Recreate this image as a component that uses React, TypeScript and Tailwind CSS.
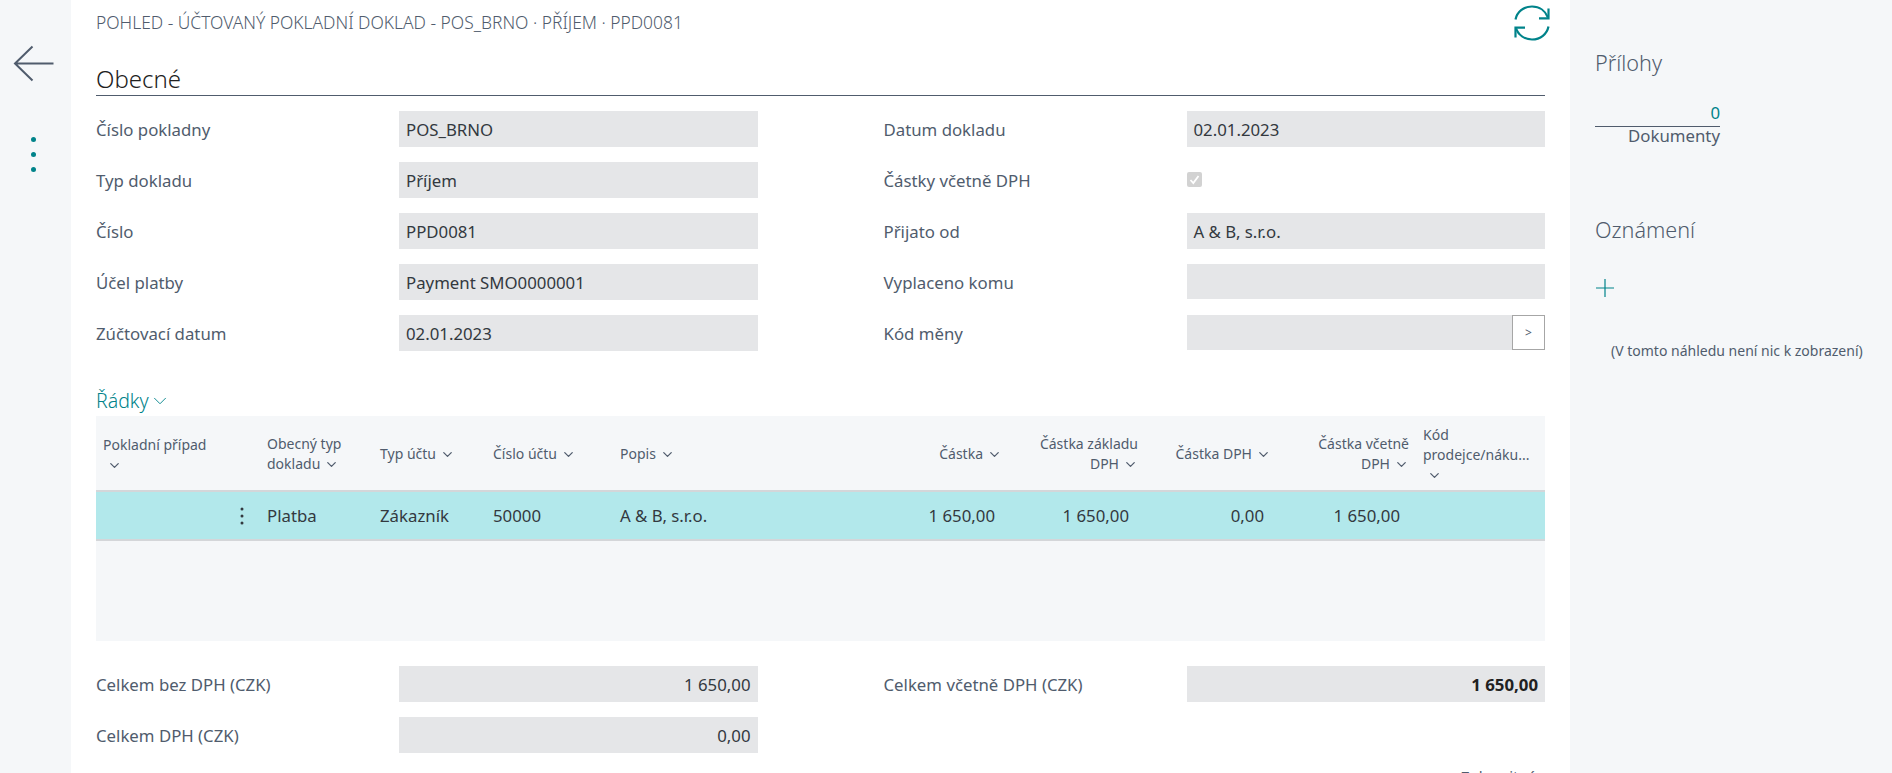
import { ChevronDown } from 'lucide-react';

const LEFT_FIELDS = [
  { label: 'Číslo pokladny', value: 'POS_BRNO' },
  { label: 'Typ dokladu', value: 'Příjem' },
  { label: 'Číslo', value: 'PPD0081' },
  { label: 'Účel platby', value: 'Payment SMO0000001' },
  { label: 'Zúčtovací datum', value: '02.01.2023' },
];

function Field({ label, children }: { label: string; children: React.ReactNode }) {
  return (
    <div className="flex h-[36px] items-center">
      <div className="w-[303px] shrink-0 pt-[1px] text-[#505c6d]">{label}</div>
      <div className="min-w-0 flex-1 self-start">{children}</div>
    </div>
  );
}

function Value({ text, right, bold }: { text?: string; right?: boolean; bold?: boolean }) {
  return (
    <div
      className={`flex items-center bg-[#e5e6e8] px-[7px] pt-[1px] text-[#33393f] ${text ? 'h-[36px]' : 'h-[35px]'} ${right ? 'justify-end' : ''} ${bold ? 'font-bold text-[#212121]' : ''}`}
    >
      {text}
    </div>
  );
}

function Head({ children, right }: { children: React.ReactNode; right?: boolean }) {
  return (
    <div className={`flex h-full items-center px-[7px] pt-[1px] ${right ? 'justify-end text-right' : ''}`}>
      <div>{children}</div>
    </div>
  );
}

const Chev = () => <ChevronDown className="ml-[4px] inline-block" size={15} strokeWidth={2} />;

export default function App() {
  return (
    <div className="flex h-[773px] overflow-hidden bg-white text-[16.8px] font-['Noto_Sans',sans-serif] leading-[20px]">
      <div className="w-[71px] shrink-0 bg-[#f5f7f9]">
        <svg className="mt-[44px] ml-[12px]" width="44" height="40" viewBox="0 0 44 40" fill="none" stroke="#505c6d" strokeWidth="2">
          <path d="M41.500 19.500H3M20.500 2.500 3 19.500l17.500 17" />
        </svg>
        <div className="mt-[53px] flex flex-col items-start gap-[10px] pl-[31px]">
          <span className="h-[5px] w-[5px] rounded-full bg-[#00838a]" />
          <span className="h-[5px] w-[5px] rounded-full bg-[#00838a]" />
          <span className="h-[5px] w-[5px] rounded-full bg-[#00838a]" />
        </div>
      </div>

      <div className="w-[1499px] shrink-0 px-[25px]">
        <div className="flex h-[44px] items-start justify-between">
          <div className="pt-[12px] text-[17.4px] font-light text-[#505c6d]">POHLED - ÚČTOVANÝ POKLADNÍ DOKLAD - POS_BRNO · PŘÍJEM · PPD0081</div>
          <svg className="mt-[4px] -mr-[6px]" width="38" height="38" viewBox="0 0 38 38" fill="none" stroke="#00838a" strokeWidth="2.200">
            <path d="M2.500 15.500C4 8 10.500 2.500 19 2.500c7.500 0 13.500 4.500 16 11" />
            <path d="M35.500 4.500v9.800h-9.500" />
            <path d="M35.500 22.500C34 30 27.500 35.500 19 35.500c-7.500 0-13.500-4.500-16-11" />
            <path d="M2.500 33.500v-9.800h9.500" />
          </svg>
        </div>

        <div className="flex h-[52px] items-end border-b border-[#505c6d] text-[24px] leading-[32px] font-light text-[#212121]">Obecné</div>

        <div className="mt-[15px] grid grid-cols-2 gap-x-[126px]">
          <div className="flex flex-col gap-[15px]">
            {LEFT_FIELDS.map((f) => (
              <Field key={f.label} label={f.label}>
                <Value text={f.value} />
              </Field>
            ))}
          </div>
          <div className="flex flex-col gap-[15px]">
            <Field label="Datum dokladu">
              <Value text="02.01.2023" />
            </Field>
            <Field label="Částky včetně DPH">
              <div className="mt-[10px] flex h-[15px] w-[15px] items-center justify-center rounded-[2px] bg-[#d2d2d2]">
                <svg width="11" height="11" viewBox="0 0 11 11" fill="none" stroke="#fff" strokeWidth="1.800">
                  <path d="M1.500 6 4.300 9 9.500 2" />
                </svg>
              </div>
            </Field>
            <Field label="Přijato od">
              <Value text="A & B, s.r.o." />
            </Field>
            <Field label="Vyplaceno komu">
              <Value />
            </Field>
            <Field label="Kód měny">
              <div className="flex h-[35px]">
                <div className="flex-1 bg-[#e5e6e8]" />
                <div className="flex w-[33px] items-center justify-center border border-[#a6a6a6] bg-white text-[12px] text-[#505c6d]">&gt;</div>
              </div>
            </Field>
          </div>
        </div>

        <div className="mt-[34px] flex h-[31px] items-center text-[19.5px] font-light text-[#00838a]">
          Řádky
          <ChevronDown size={22} strokeWidth={1} />
        </div>

        <div className="h-[225px] bg-[#f5f7f9]">
          <div className="grid h-[76px] grid-cols-[164px_113px_113px_127px_227px_169px_136px_133px_138px_130px] border-b-2 border-[#d4d6d9] text-[14px] text-[#505c6d]">
            <Head>
              Pokladní případ
              <br />
              <ChevronDown className="ml-[4px] mt-[3px]" size={15} strokeWidth={2} />
            </Head>
            <Head>
              Obecný typ
              <br />
              dokladu
              <Chev />
            </Head>
            <Head>
              Typ účtu
              <Chev />
            </Head>
            <Head>
              Číslo účtu
              <Chev />
            </Head>
            <Head>
              Popis
              <Chev />
            </Head>
            <Head right>
              Částka
              <Chev />
            </Head>
            <Head right>
              Částka základu
              <br />
              DPH
              <Chev />
            </Head>
            <Head right>
              Částka DPH
              <Chev />
            </Head>
            <Head right>
              Částka včetně
              <br />
              DPH
              <Chev />
            </Head>
            <Head>
              Kód
              <br />
              prodejce/náku...
              <br />
              <ChevronDown className="ml-[4px] mt-[3px]" size={15} strokeWidth={2} />
            </Head>
          </div>
          <div className="grid h-[49px] grid-cols-[164px_113px_113px_127px_227px_169px_136px_133px_138px_130px] items-center border-b-2 border-[#d4d6d9] bg-[#b2e8eb] text-[#33393f]">
            <div className="flex justify-end pr-[16px]">
              <svg width="4" height="20" viewBox="0 0 4 20" fill="#33393f">
                <circle cx="2" cy="3" r="1.500" />
                <circle cx="2" cy="10" r="1.500" />
                <circle cx="2" cy="17" r="1.500" />
              </svg>
            </div>
            <div className="px-[7px]">Platba</div>
            <div className="px-[7px]">Zákazník</div>
            <div className="px-[7px]">50000</div>
            <div className="px-[7px]">A &amp; B, s.r.o.</div>
            <div className="pr-[14px] text-right">1 650,00</div>
            <div className="pr-[16px] text-right">1 650,00</div>
            <div className="pr-[14px] text-right">0,00</div>
            <div className="pr-[16px] text-right">1 650,00</div>
            <div />
          </div>
        </div>

        <div className="mt-[25px] grid grid-cols-2 gap-x-[126px]">
          <div className="flex flex-col gap-[15px]">
            <Field label="Celkem bez DPH (CZK)">
              <Value text="1 650,00" right />
            </Field>
            <Field label="Celkem DPH (CZK)">
              <Value text="0,00" right />
            </Field>
          </div>
          <div>
            <Field label="Celkem včetně DPH (CZK)">
              <Value text="1 650,00" right bold />
            </Field>
          </div>
        </div>
        <div className="mt-[13px] pl-[1365px] text-[15px] whitespace-nowrap text-[#505c6d]">Zobrazit více</div>
      </div>

      <div className="min-w-0 flex-1 bg-[#f5f7f9] pl-[25px] text-[#505c6d]">
        <div className="mt-[49px] text-[21.6px] leading-[28px] font-light">Přílohy</div>
        <div className="mt-[25px] w-[125px] text-right">
          <div className="border-b border-[#505c6d] pb-[2px] leading-[22px] text-[#00838a]">0</div>
          <div className="leading-[18px]">Dokumenty</div>
        </div>
        <div className="mt-[71px] text-[21.6px] leading-[28px] font-light">Oznámení</div>
        <svg className="mt-[34px]" width="20" height="20" viewBox="0 0 20 20" fill="none" stroke="#00838a" strokeWidth="1.200">
          <path d="M10 1v18M1 10h18" />
        </svg>
        <div className="mt-[43px] pl-[16px] text-[14px] whitespace-nowrap">(V tomto náhledu není nic k zobrazení)</div>
      </div>
    </div>
  );
}
